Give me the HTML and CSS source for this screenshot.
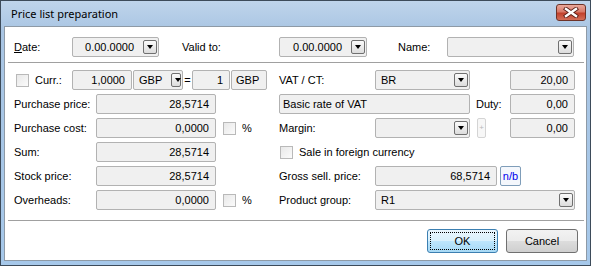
FILE: index.html
```html
<!DOCTYPE html>
<html>
<head>
	<title>Price list preparation</title>
	<link rel="stylesheet" href="styles.css">
</head>
<body>
	<div class="window">
		<div class="titlebar">
			<span class="title">Price list preparation</span>
			<span class="close">
				<svg width="16" height="11" viewBox="0 0 16 11">
					<path d="M3 2 L13 9 M13 2 L3 9" stroke="#5a1f17" stroke-width="4.2" stroke-linecap="square"/>
					<path d="M3 2 L13 9 M13 2 L3 9" stroke="#ffffff" stroke-width="2.4" stroke-linecap="square"/>
				</svg>
			</span>
		</div>

		<div class="client">
			<!-- horní řádek: datum, platnost, název -->
			<div class="top-row">
				<span class="lbl lbl-date"><u>D</u>ate:</span>
				<div class="combo combo-date"><span class="val">0.00.0000</span><span class="drop"></span></div>
				<span class="lbl lbl-valid">Valid to:</span>
				<div class="combo combo-valid"><span class="val">0.00.0000</span><span class="drop"></span></div>
				<span class="lbl lbl-name">Name:</span>
				<div class="combo combo-name"><span class="val"></span><span class="drop"></span></div>
			</div>

			<div class="sep"></div>

			<div class="main">
				<!-- levá strana -->
				<div class="panel panel-left">
					<div class="curr-row">
						<span class="check"></span>
						<span class="lbl lbl-curr">Curr.:</span>
						<div class="field f-rate">1,0000</div>
						<div class="combo combo-cur"><span class="val val-left">GBP</span><span class="drop"></span></div>
						<span class="eq">=</span>
						<div class="field f-one">1</div>
						<div class="field f-gbp">GBP</div>
					</div>

					<span class="lbl">Purchase price:</span>
					<div class="field">28,5714</div>
					<span></span>

					<span class="lbl">Purchase cost:</span>
					<div class="field">0,0000</div>
					<span class="pct"><span class="check"></span>%</span>

					<span class="lbl">Sum:</span>
					<div class="field">28,5714</div>
					<span></span>

					<span class="lbl">Stock price:</span>
					<div class="field">28,5714</div>
					<span></span>

					<span class="lbl">Overheads:</span>
					<div class="field">0,0000</div>
					<span class="pct"><span class="check"></span>%</span>
				</div>

				<!-- pravá strana -->
				<div class="panel panel-right">
					<span class="lbl">VAT / CT:</span>
					<div class="combo"><span class="val val-left">BR</span><span class="drop"></span></div>
					<span></span>
					<div class="field">20,00</div>

					<div class="field field-text span-2">Basic rate of VAT</div>
					<span class="lbl lbl-duty">Duty:</span>
					<div class="field">0,00</div>

					<span class="lbl">Margin:</span>
					<div class="combo"><span class="val"></span><span class="drop"></span></div>
					<span class="plus-cell"><span class="plus">+</span></span>
					<div class="field">0,00</div>

					<label class="sale span-all"><span class="check"></span>Sale in foreign currency</label>

					<span class="lbl">Gross sell. price:</span>
					<div class="gross span-3">
						<div class="field f-gross">68,5714</div>
						<span class="nb">n/b</span>
					</div>

					<span class="lbl">Product group:</span>
					<div class="combo span-3"><span class="val val-left">R1</span><span class="drop"></span></div>
				</div>
			</div>

			<div class="sep sep-bottom"></div>

			<div class="footer">
				<button class="btn btn-ok"><span class="focus">OK</span></button>
				<button class="btn">Cancel</button>
			</div>
		</div>
	</div>
</body>
</html>
```

FILE: styles.css
```css
	* {
		box-sizing: border-box;
	}
	body {
		margin: 0;
		font-family: "Liberation Sans", Arial, sans-serif;
		font-size: 11px;
		color: #000;
		background: #fff;
	}
	.window {
		width: 591px;
		height: 266px;
		border: 1px solid #3d4b5a;
		background: linear-gradient(#bfd4eb, #a9c5e3 30px, #a6c8ea);
		padding: 0 3px 4px 3px;
		display: flex;
		flex-direction: column;
	}
	.titlebar {
		height: 25px;
		display: flex;
		justify-content: space-between;
		align-items: flex-start;
		padding: 3px 1px 0 7px;
	}
	.title {
		font-family: "Noto Sans", sans-serif;
		font-size: 11px;
		line-height: 20px;
		color: #000;
	}
	.close {
		width: 30px;
		height: 17px;
		border: 1px solid #6e3328;
		border-radius: 3px;
		background: linear-gradient(#eaa89b, #d87a69 45%, #c2412c 55%, #d36f59);
		display: flex;
		align-items: center;
		justify-content: center;
	}
	.close svg {
		display: block;
	}
	.client {
		flex: 1;
		background: #fff;
		border: 1px solid #8e9aa6;
		padding: 10px 0 0 0;
	}

	/* horní řádek */
	.top-row {
		display: flex;
		align-items: center;
		height: 20px;
		padding-left: 9px;
	}
	.lbl {
		white-space: nowrap;
		line-height: 20px;
	}
	.lbl-date { width: 58px; }
	.combo-date { width: 87px; }
	.lbl-valid { width: 97px; margin-left: 23px; }
	.combo-valid { width: 88px; }
	.lbl-name { width: 49px; margin-left: 31px; }
	.combo-name { width: 127px; }

	.sep {
		height: 1px;
		background: #a0a0a0;
		margin: 5px 2px 0 3px;
	}
	.sep-bottom {
		margin-top: 10px;
	}

	/* pole */
	.field, .combo {
		height: 20px;
		border: 1px solid #b2b2b2;
		border-radius: 2px;
		background: #f0f0f0;
		line-height: 18px;
		white-space: nowrap;
		overflow: hidden;
	}
	.field {
		text-align: right;
		padding-right: 6px;
	}
	.field-text {
		text-align: left;
		padding-left: 3px;
	}
	.combo {
		display: flex;
		align-items: center;
		padding-right: 1px;
	}
	.combo .val {
		flex: 1;
		text-align: right;
		padding-right: 9px;
	}
	.combo .val-left {
		text-align: left;
		padding-left: 5px;
	}
	.drop {
		width: 14px;
		height: 14px;
		border: 1px solid #707070;
		border-radius: 2px;
		background: linear-gradient(#fbfbfb, #dcdcdc);
		position: relative;
	}
	.drop::after {
		content: "";
		position: absolute;
		left: 3px;
		top: 4px;
		border-left: 3.5px solid transparent;
		border-right: 3.5px solid transparent;
		border-top: 4px solid #000;
	}
	.check {
		display: inline-block;
		width: 13px;
		height: 13px;
		border: 1px solid #b9b9b9;
		background: linear-gradient(135deg, #e8e8e8, #fbfbfb);
	}

	/* hlavní část */
	.main {
		display: flex;
		margin-top: 7px;
		padding-left: 9px;
	}
	.panel {
		display: grid;
		grid-auto-rows: 20px;
		row-gap: 4px;
		align-items: center;
	}
	.panel-left {
		width: 265px;
		grid-template-columns: 82px 120px 1fr;
	}
	.panel-right {
		grid-template-columns: 96px 95px 40px 65px;
	}
	.curr-row {
		grid-column: 1 / -1;
		display: flex;
		align-items: center;
		height: 20px;
	}
	.curr-row .check {
		margin-left: 2px;
	}
	.lbl-curr {
		width: 37px;
		margin-left: 6px;
	}
	.f-rate { width: 60px; }
	.combo-cur { width: 50px; margin-left: 1px; }
	.eq {
		width: 9px;
		text-align: center;
	}
	.f-one { width: 38px; }
	.f-gbp {
		width: 36px;
		margin-left: 1px;
		text-align: left;
		padding-left: 4px;
	}
	.pct {
		display: flex;
		align-items: center;
		gap: 6px;
		padding-left: 7px;
	}
	.span-2 { grid-column: span 2; }
	.span-3 { grid-column: span 3; }
	.span-all { grid-column: 1 / -1; }
	.lbl-duty {
		padding-left: 6px;
	}
	.plus-cell {
		display: flex;
		padding-left: 7px;
	}
	.plus {
		width: 9px;
		height: 20px;
		border: 1px solid #d4d4d4;
		border-radius: 2px;
		background: #f7f7f7;
		color: #b8b8b8;
		font-size: 8px;
		line-height: 18px;
		text-align: center;
	}
	.sale {
		display: flex;
		align-items: center;
		gap: 6px;
		padding-left: 1px;
	}
	.gross {
		display: flex;
		align-items: center;
		gap: 3px;
	}
	.f-gross { width: 122px; }
	.nb {
		width: 21px;
		height: 20px;
		border: 1px solid #7f9db9;
		border-radius: 2px;
		background: #f4f7fc;
		color: #0000ee;
		line-height: 18px;
		text-align: center;
	}

	/* tlačítka */
	.footer {
		display: flex;
		justify-content: flex-end;
		gap: 8px;
		margin-top: 8px;
		padding-right: 8px;
	}
	.btn {
		width: 72px;
		height: 24px;
		font-family: inherit;
		font-size: 11px;
		color: #000;
		border: 1px solid #707070;
		border-radius: 3px;
		background: linear-gradient(#f2f2f2, #ebebeb 50%, #dddddd 50%, #cfcfcf);
		padding: 0;
	}
	.btn-ok {
		width: 71px;
		border-color: #3c7fb1;
		background: linear-gradient(#eaf6fd, #d9f0fc 50%, #bee6fd 50%, #a7d9f5);
		padding: 2px;
	}
	.btn-ok .focus {
		display: block;
		height: 100%;
		border: 1px dotted #000;
		line-height: 16px;
	}
```
